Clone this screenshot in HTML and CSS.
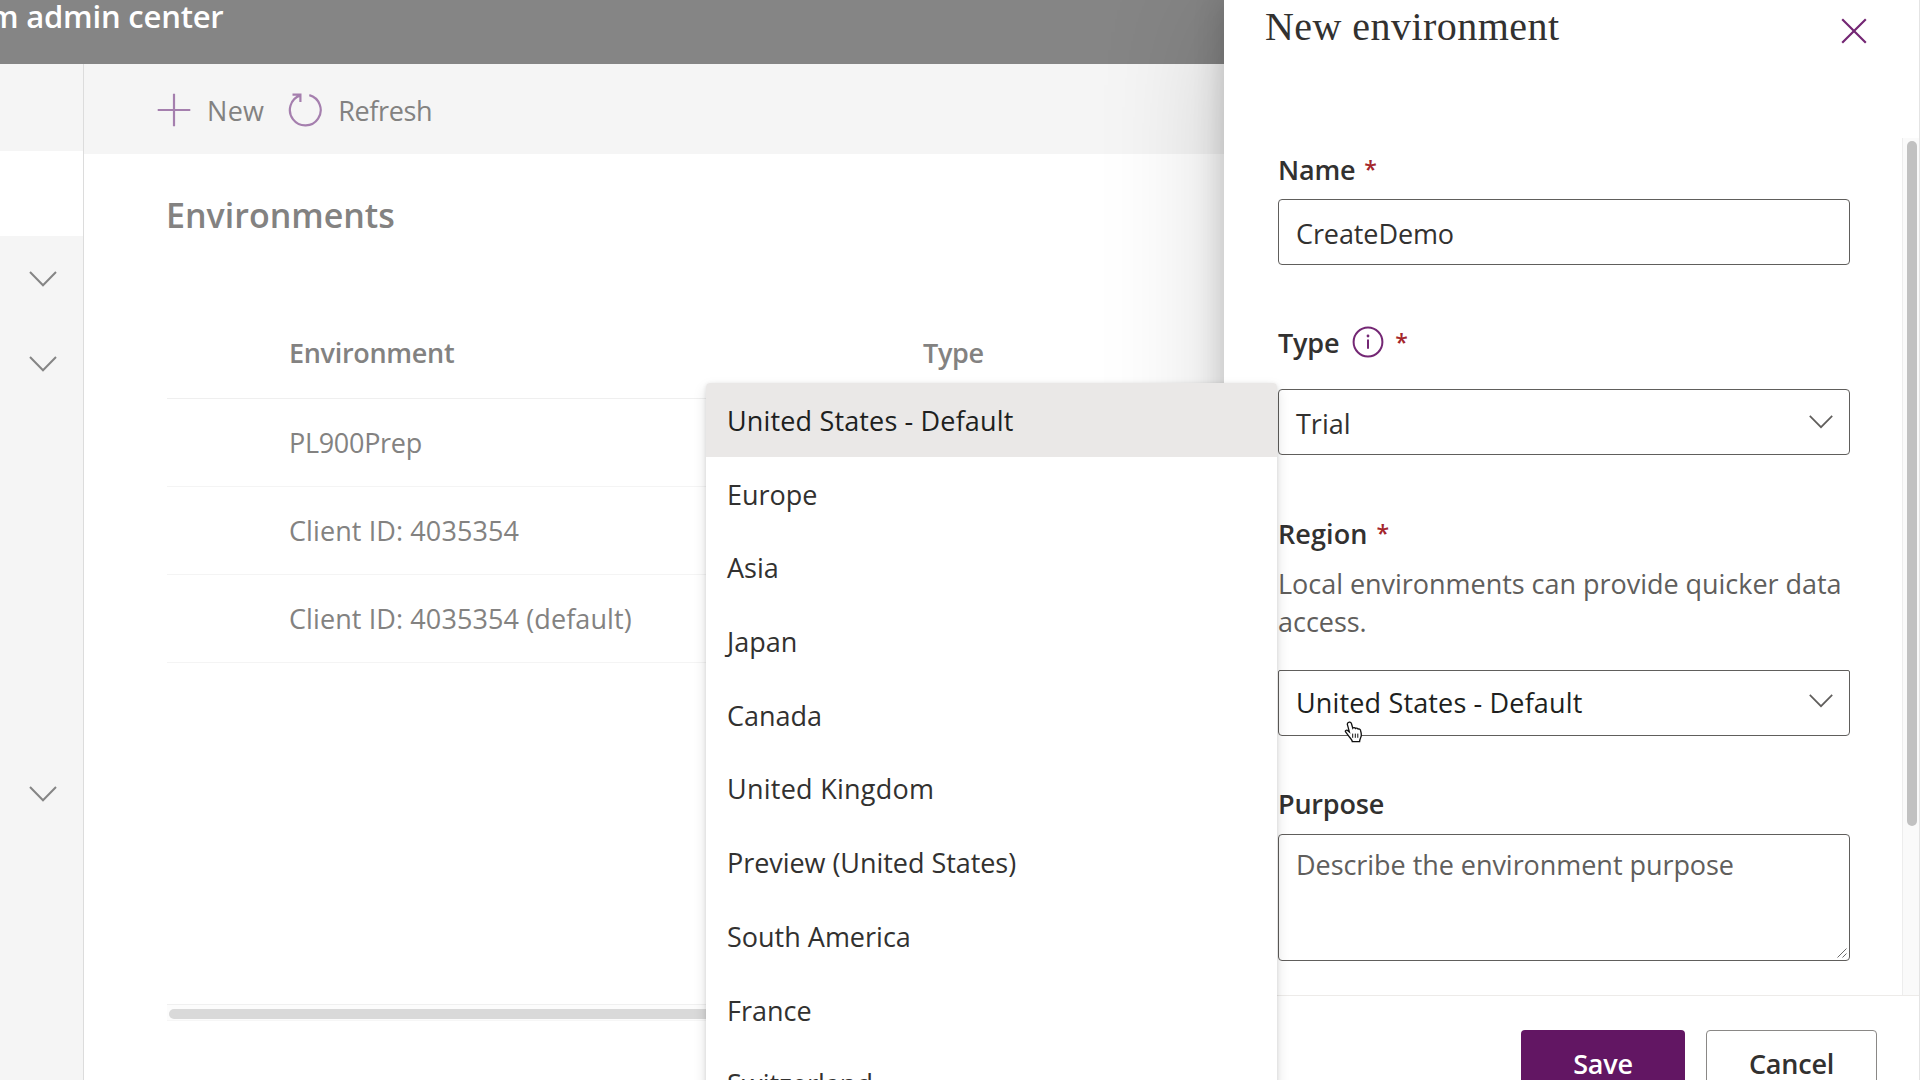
FILE: index.html
```html
<!DOCTYPE html>
<html lang="en">
<head>
<meta charset="utf-8">
<title>Environments - admin center</title>
<link rel="stylesheet" href="styles.css">
</head>
<body>
<div class="app">
  <header class="topbar"><span class="topbar-title">m admin center</span></header>
  <div class="workspace">
    <nav class="nav">
      <div class="nav-item nav-menu"></div>
      <div class="nav-item nav-selected"></div>
      <div class="nav-item"><svg class="nav-chevron" viewBox="0 0 28 16"><path d="M1 1l13 13.2L27 1"/></svg></div>
      <div class="nav-item"><svg class="nav-chevron" viewBox="0 0 28 16"><path d="M1 1l13 13.2L27 1"/></svg></div>
      <div class="nav-item nav-last"><svg class="nav-chevron" viewBox="0 0 28 16"><path d="M1 1l13 13.2L27 1"/></svg></div>
    </nav>
    <main class="main">
      <div class="toolbar">
        <div class="command">
          <svg class="command-icon" viewBox="0 0 34 34"><path d="M17 .7v32.6M.7 17h32.6"/></svg>
          <span class="label-new">New</span>
        </div>
        <div class="command">
          <svg class="command-icon" viewBox="0 0 34 34"><path d="M21.3 2.1A15.4 15.4 0 1 1 12.3 2.400M4.500 1.600h7.900v7.400"/></svg>
          <span class="label-refresh">Refresh</span>
        </div>
      </div>
      <section class="content">
        <h1 class="heading">Environments</h1>
        <div class="table">
          <div class="row row-head"><span>Environment</span><span>Type</span></div>
          <div class="row"><span class="code">PL900Prep</span></div>
          <div class="row"><span>Client ID: 4035354</span></div>
          <div class="row"><span>Client ID: 4035354 (default)</span></div>
        </div>
        <div class="hscroll"><div class="hscroll-thumb"></div></div>
      </section>
    </main>
  </div>

  <aside class="panel">
    <div class="panel-header">
      <h2 class="panel-title">New environment</h2>
      <svg class="close" viewBox="0 0 26 26"><path d="M1.2 1.2l23.6 23.6M24.8 1.2L1.2 24.8"/></svg>
    </div>
    <div class="panel-body">
      <form class="form">
        <div class="field field-name">
          <div class="label">Name <span class="star">*</span></div>
          <div class="box">CreateDemo</div>
        </div>
        <div class="field field-type">
          <div class="label">Type
            <svg class="info" viewBox="0 0 32 32"><circle cx="16" cy="16" r="14.4"/><path d="M16 13.4v9.4"/><circle class="info-dot" cx="16" cy="10" r="1.4"/></svg>
            <span class="star">*</span></div>
          <div class="box">Trial<svg class="chevron" viewBox="0 0 24 14"><path d="M.8 .8L12 12.2 23.2 .8"/></svg></div>
        </div>
        <div class="field field-region">
          <div class="label label-region">Region <span class="star">*</span></div>
          <p class="help">Local environments can provide quicker data access.</p>
          <div class="box box-open">United States - Default<svg class="chevron" viewBox="0 0 24 14"><path d="M.8 .8L12 12.2 23.2 .8"/></svg></div>
        </div>
        <div class="field field-purpose">
          <div class="label">Purpose</div>
          <div class="area">Describe the environment purpose<svg class="grip" viewBox="0 0 10 10"><path d="M.5 9.5l9-9M5.5 9.5l4-4"/></svg></div>
        </div>
      </form>
      <div class="vscroll"><div class="vscroll-thumb"></div></div>
    </div>
    <div class="panel-footer">
      <div class="btn btn-primary">Save</div>
      <div class="btn btn-cancel">Cancel</div>
    </div>
  </aside>

  <div class="dropdown">
    <div class="option option-wide option-active">United States - Default</div>
    <div class="option">Europe</div>
    <div class="option">Asia</div>
    <div class="option">Japan</div>
    <div class="option">Canada</div>
    <div class="option option-kingdom">United Kingdom</div>
    <div class="option option-preview">Preview (United States)</div>
    <div class="option">South America</div>
    <div class="option">France</div>
    <div class="option">Switzerland</div>
  </div>

  <svg class="cursor" viewBox="0 0 20 22"><path d="M5.2 1.2c1.100-.3 1.900.3 2.300 1.500l1.300 4.500c.6-.8 2.100-.7 2.600.3.800-.7 2.200-.5 2.700.6.900-.4 2.200 0 2.400 1.100.5 1.700.9 3.600.8 5.200-.1 2-1.500 3-1.700 6.200H8.300c-.3-2.300-2.600-3.800-4.100-6.200L1.600 11c-.8-1.400.8-2.300 1.900-1.600l1.900 1.500-2-7.300c-.3-1.200.6-2.100 1.800-2.400z"/><path class="cursor-lines" d="M8.700 12.600v4.200M11.300 12.600v4.200M13.800 12.600v4.200"/></svg>
</div>
</body>
</html>
```
FILE: styles.css
```css
* { box-sizing: border-box; }

body {
  margin: 0;
  overflow: hidden;
  background: #fff;
  color: #323130;
  font: 400 27px/38px "Open Sans", "Noto Sans", sans-serif;
}

h1, h2, p { margin: 0; }

svg { display: block; flex: none; fill: none; }

.app {
  position: relative;
  display: flex;
  flex-direction: column;
  width: 1920px;
  height: 1080px;
  overflow: hidden;
}

/* Dimmed page behind the panel */
.topbar {
  height: 64px;
  flex: none;
  background: #858585;
  color: #fff;
  font-size: 31px;
  font-weight: 600;
  line-height: 32px;
}

.topbar-title {
  display: block;
  margin-left: -11px;
  letter-spacing: -0.2px;
  white-space: nowrap;
}

.workspace { display: flex; flex: 1; }

.nav {
  width: 84px;
  flex: none;
  background: #f5f5f5;
  border-right: 1px solid #dcdcdc;
}

.nav-item {
  display: flex;
  align-items: center;
  height: 85px;
  padding-left: 29px;
}

.nav-menu { height: 87px; }
.nav-selected { background: #fff; }
.nav-last { margin-top: 345px; }

.nav-chevron {
  width: 28px;
  height: 16px;
  stroke: #858585;
  stroke-width: 2;
}

.main {
  display: flex;
  flex: 1;
  flex-direction: column;
  color: #838281;
}

.toolbar {
  display: flex;
  align-items: center;
  gap: 24px;
  height: 90px;
  padding: 1px 0 0 73px;
  background: #f5f5f5;
}

.command { display: flex; align-items: center; gap: 16px; }
.command span { padding-top: 3px; }
.command-icon { width: 34px; height: 34px; stroke: #a57fae; stroke-width: 2.2; }
.label-new { letter-spacing: 0.3px; }
.label-refresh { letter-spacing: -0.4px; }

.content {
  display: flex;
  flex: 1;
  flex-direction: column;
  padding: 37px 0 59px 83px;
}

.heading {
  margin: 0 0 67px -1px;
  font-size: 34px;
  font-weight: 600;
  line-height: 48px;
}

.row {
  display: grid;
  grid-template-columns: 634px 1fr;
  align-items: center;
  height: 88px;
  padding-left: 122px;
  border-bottom: 1px solid #f4f4f4;
  letter-spacing: 0.1px;
}

.row-head {
  height: 93px;
  padding-top: 2px;
  border-color: #efefef;
  font-weight: 600;
  letter-spacing: -0.3px;
}

.code { letter-spacing: -0.3px; }

.hscroll {
  height: 17px;
  margin-top: auto;
  padding: 4px 0 0 2px;
  border-top: 1px solid #f0f0f0;
  border-bottom: 1px solid #f6f6f6;
  background: #fcfcfc;
}

.hscroll-thumb { width: 900px; height: 10px; border-radius: 5px; background: #d9d9d9; }

/* Side panel */
.panel {
  position: absolute;
  top: 0;
  right: 0;
  display: flex;
  flex-direction: column;
  width: 696px;
  height: 1080px;
  border-right: 1px solid #e4e4e4;
  background: #fff;
  box-shadow: 0 10px 115px rgba(0, 0, 0, 0.18), 0 0 29px rgba(0, 0, 0, 0.18);
}

.panel-header {
  display: flex;
  justify-content: space-between;
  height: 138px;
  flex: none;
  padding: 0 52px 0 41px;
}

.panel-title {
  font: 400 40px/53px "Liberation Serif", serif;
  letter-spacing: 0.45px;
}

.close { width: 26px; height: 26px; margin-top: 18px; stroke: #742774; stroke-width: 2.2; }

.panel-body { display: flex; flex: none; height: 857px; }
.form { width: 572px; margin-left: 54px; }
.field { display: flex; flex-direction: column; }
.field-name { padding-top: 13px; }
.field-type { padding-top: 59px; }
.field-region { padding-top: 60px; }
.field-purpose { padding-top: 49px; }

.label {
  display: flex;
  height: 38px;
  font-weight: 600;
  letter-spacing: -0.2px;
}

.label-region { letter-spacing: 0.1px; }

.star { margin-left: 9px; color: #a4262c; font-size: 23px; line-height: 36px; }
.info { width: 32px; height: 32px; margin: 2px 2px 0 13px; stroke: #742774; stroke-width: 2; }
.info-dot { fill: #742774; stroke: none; }

.box {
  display: flex;
  align-items: center;
  justify-content: space-between;
  height: 66px;
  margin-top: 10px;
  padding: 3px 16px 0 17px;
  border: 1px solid #605e5c;
  border-radius: 4px;
}

.field-name .box { letter-spacing: -0.1px; }
.field-type .box { margin-top: 27px; }

.help {
  margin-top: 12px;
  color: #605e5c;
  line-height: 37.5px;
  letter-spacing: -0.03px;
}

.box-open {
  margin-top: 30px;
  padding-top: 0;
  border-radius: 2px 2px 4px 4px;
  color: #201f1e;
  letter-spacing: 0.15px;
}

.chevron { width: 24px; height: 14px; margin-top: -4px; stroke: #605e5c; stroke-width: 1.7; }

.area {
  position: relative;
  height: 127px;
  margin-top: 11px;
  padding: 11px 17px;
  border: 1px solid #605e5c;
  border-radius: 4px;
  color: #605e5c;
  letter-spacing: -0.05px;
}

.grip {
  position: absolute;
  right: 2px;
  bottom: 2px;
  width: 10px;
  height: 10px;
  stroke: #6a6a6a;
}

.vscroll {
  width: 17px;
  margin-left: auto;
  padding: 3px 0 0 4px;
  border-left: 1px solid #ededed;
  background: #fafafa;
}

.vscroll-thumb { width: 10px; height: 685px; border-radius: 5px; background: #c1c1c1; }

.panel-footer {
  display: flex;
  flex: 1;
  gap: 21px;
  justify-content: flex-end;
  padding: 34px 42px 0 0;
  border-top: 1px solid #edebe9;
}

.btn {
  height: 66px;
  border-radius: 4px;
  font-weight: 600;
  line-height: 68px;
  letter-spacing: -0.2px;
  text-align: center;
}

.btn-primary { width: 164px; background: #621663; color: #fff; }
.btn-cancel { width: 171px; border: 1px solid #8a8886; line-height: 66px; }

/* Region list */
.dropdown {
  position: absolute;
  top: 383px;
  left: 706px;
  width: 571px;
  height: 760px;
  border-radius: 4px;
  background: #fff;
  box-shadow: 0 6px 14px rgba(0, 0, 0, 0.13), 0 1px 4px rgba(0, 0, 0, 0.11);
}

.option { height: 73.7px; padding-left: 21px; line-height: 75.5px; }
.option-wide { letter-spacing: 0.15px; }
.option-kingdom { letter-spacing: 0.25px; }
.option-preview { letter-spacing: -0.05px; }
.option-active { border-radius: 4px 4px 0 0; background: #eae8e7; color: #201f1e; }

.cursor {
  position: absolute;
  top: 721px;
  left: 1344px;
  width: 20px;
  height: 22px;
  fill: #fff;
  stroke: #111;
  stroke-width: 1.3;
}

.cursor-lines { stroke-width: 1; }
```
